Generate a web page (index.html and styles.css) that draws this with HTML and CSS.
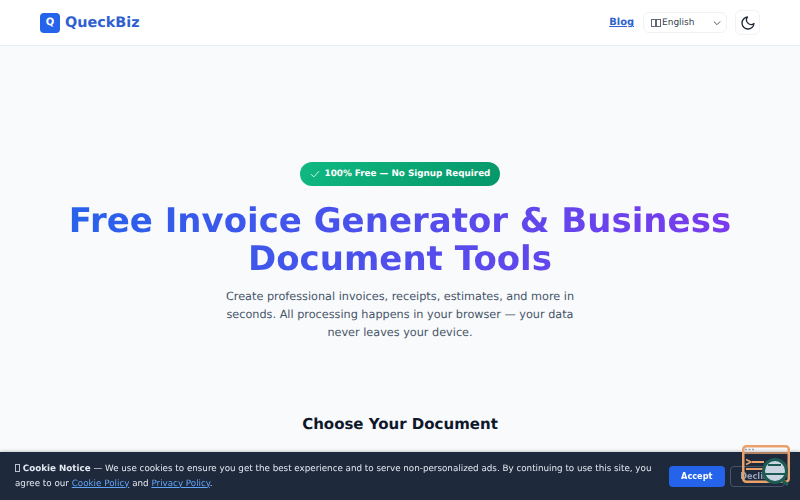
FILE: index.html
```html
<!DOCTYPE html>
<html lang="en">
<head>
<meta charset="utf-8">
<title>QueckBiz</title>
<link rel="stylesheet" href="styles.css">
</head>
<body>
<header class="topbar">
  <a class="brand" href="#"><span class="brand-mark">Q</span><span class="brand-name">QueckBiz</span></a>
  <nav class="topnav">
    <a class="blog-link" href="#">Blog</a>
    <div class="lang-select">
      <span class="lang-label"><span class="tofu"></span><span class="tofu"></span><span class="lang-name">English</span></span>
      <svg class="chev" width="10" height="10" viewBox="0 0 24 24" fill="none" stroke="#555" stroke-width="2.4" stroke-linecap="round" stroke-linejoin="round"><path d="M5 9l7 7 7-7"/></svg>
    </div>
    <button class="theme-btn" type="button" aria-label="Toggle theme">
      <svg width="16" height="16" viewBox="0 0 24 24" fill="none" stroke="#1f2937" stroke-width="2" stroke-linecap="round" stroke-linejoin="round"><path d="M21 12.8A9 9 0 1 1 11.2 3a7 7 0 0 0 9.8 9.8z"/></svg>
    </button>
  </nav>
</header>
<main class="hero">
  <div class="badge">
    <svg width="10" height="10" viewBox="0 0 24 24" fill="none" stroke="#fff" stroke-width="2" stroke-linecap="round" stroke-linejoin="round"><path d="M3 13l6 6L21 6"/></svg>
    <span>100% Free — No Signup Required</span>
  </div>
  <h1 class="title">Free Invoice Generator &amp; Business Document Tools</h1>
  <p class="lead">Create professional invoices, receipts, estimates, and more in seconds. All processing happens in your browser — your data never leaves your device.</p>
  <h2 class="section-title">Choose Your Document</h2>
</main>
<aside class="cookie">
  <p class="cookie-text"><span class="tofu cookie-tofu"></span> <strong>Cookie Notice</strong> — We use cookies to ensure you get the best experience and to serve non-personalized ads. By continuing to use this site, you agree to our <a href="#">Cookie Policy</a> and <a href="#">Privacy Policy</a>.</p>
  <div class="cookie-actions">
    <button class="btn-accept" type="button">Accept</button>
    <button class="btn-decline" type="button">Decline</button>
  </div>
</aside>
<svg class="float-widget" width="50" height="44" viewBox="0 0 50 44" fill="none">
  <rect x="2.25" y="2.25" width="45.5" height="35.5" rx="3" stroke="#e9a26c" stroke-width="2.5"/>
  <path d="M2.25 9h45.5" stroke="#e9a26c" stroke-width="1.6"/>
  <path d="M4 5.5h2M7.5 5.5h2M11 5.5h2" stroke="#94a3b8" stroke-width="1.3"/>
  <path d="M5 15.5l5 2.5-5 2.5" stroke="#e9a26c" stroke-width="1.6"/>
  <path d="M11 18h12M5 25h18" stroke="#e9a26c" stroke-width="2"/>
  <circle cx="34" cy="27" r="11.5" fill="#cbd5e1" stroke="#1d5c55" stroke-width="3"/>
  <path d="M27 21h13M23 30h23" stroke="#1d5c55" stroke-width="1.8"/>
  <path d="M42 37l5 4" stroke="#1d5c55" stroke-width="3"/>
</svg>
</body>
</html>
```
FILE: styles.css
```css
* { box-sizing: border-box; }
html, body { height: 100%; }
body {
  margin: 0;
  overflow: hidden;
  background: #f8fafc;
  color: #0f172a;
  font-family: "DejaVu Sans", sans-serif;
  text-rendering: geometricPrecision;
}
.topbar {
  height: 46px;
  display: flex;
  align-items: center;
  justify-content: space-between;
  padding: 0 40px;
  background: #fff;
  border-bottom: 1px solid #e8edf3;
}
.brand {
  display: flex;
  align-items: center;
  gap: 5px;
  text-decoration: none;
}
.brand-mark {
  width: 20px;
  height: 20px;
  display: flex;
  align-items: center;
  justify-content: center;
  border-radius: 4px;
  background: #2563eb;
  color: #fff;
  font-size: 10px;
  font-weight: 700;
}
.brand-name {
  color: #2f5fd0;
  font-size: 14.4px;
  font-weight: 700;
}
.topnav {
  display: flex;
  align-items: center;
  gap: 8px;
}
.blog-link {
  margin-right: 1px;
  color: #2f64cf;
  font-size: 9.9px;
  font-weight: 700;
  text-decoration: underline;
}
.lang-select {
  width: 84px;
  height: 21px;
  display: flex;
  align-items: center;
  justify-content: space-between;
  padding: 0 4px 0 7px;
  border: 1px solid #f0f2f5;
  border-radius: 6px;
  background: #fff;
  color: #374151;
  font-size: 9px;
}
.lang-label {
  display: flex;
  align-items: center;
}
.lang-name { margin-left: 1px; }
.tofu {
  display: inline-block;
  width: 5px;
  height: 8px;
  border: 1px solid currentColor;
  opacity: .8;
}
.cookie-tofu {
  vertical-align: -1px;
}
.theme-btn {
  width: 25px;
  height: 25px;
  display: flex;
  align-items: center;
  justify-content: center;
  padding: 0;
  border: 1px solid #f0f2f5;
  border-radius: 6px;
  background: #fff;
}
.hero {
  display: flex;
  flex-direction: column;
  align-items: center;
  padding-top: 116px;
  text-align: center;
}
.badge {
  height: 24px;
  display: flex;
  align-items: center;
  gap: 5px;
  padding: 0 10px;
  border-radius: 12px;
  background: linear-gradient(135deg, #10b981, #059669);
  color: #fff;
  font-size: 8.8px;
  font-weight: 700;
}
.title {
  width: 700px;
  margin: 16px 0 0;
  font-size: 34px;
  font-weight: 700;
  line-height: 38px;
  background: linear-gradient(90deg, #2563eb, #7c3aed);
  -webkit-background-clip: text;
  background-clip: text;
  color: transparent;
}
.lead {
  width: 360px;
  margin: 10px 0 0;
  color: #475569;
  font-size: 11.25px;
  line-height: 18px;
}
.section-title {
  margin: 73px 0 0;
  color: #0f172a;
  font-size: 15px;
  font-weight: 700;
}
.cookie {
  position: fixed;
  left: 0;
  right: 0;
  bottom: 0;
  height: 48px;
  display: flex;
  align-items: center;
  gap: 12px;
  padding: 0 15px;
  background: #1e293b;
  color: #e2e8f0;
  box-shadow: 0 -1px 3px rgba(0, 0, 0, .2);
}
.cookie-text {
  flex: 1;
  margin: 1px 0 0;
  font-size: 8.75px;
  line-height: 14.4px;
}
.cookie-text a { color: #60a5fa; }
.cookie-actions {
  display: flex;
  gap: 5px;
}
.btn-accept, .btn-decline {
  width: 55.5px;
  height: 21px;
  padding: 0;
  border-radius: 4px;
  font: 700 8.2px "DejaVu Sans", sans-serif;
}
.btn-accept {
  border: 0;
  background: #2563eb;
  color: #fff;
}
.btn-decline {
  border: 1px solid #475569;
  background: transparent;
  color: #94a3b8;
}
.float-widget {
  position: fixed;
  right: 9px;
  bottom: 12px;
}
```
